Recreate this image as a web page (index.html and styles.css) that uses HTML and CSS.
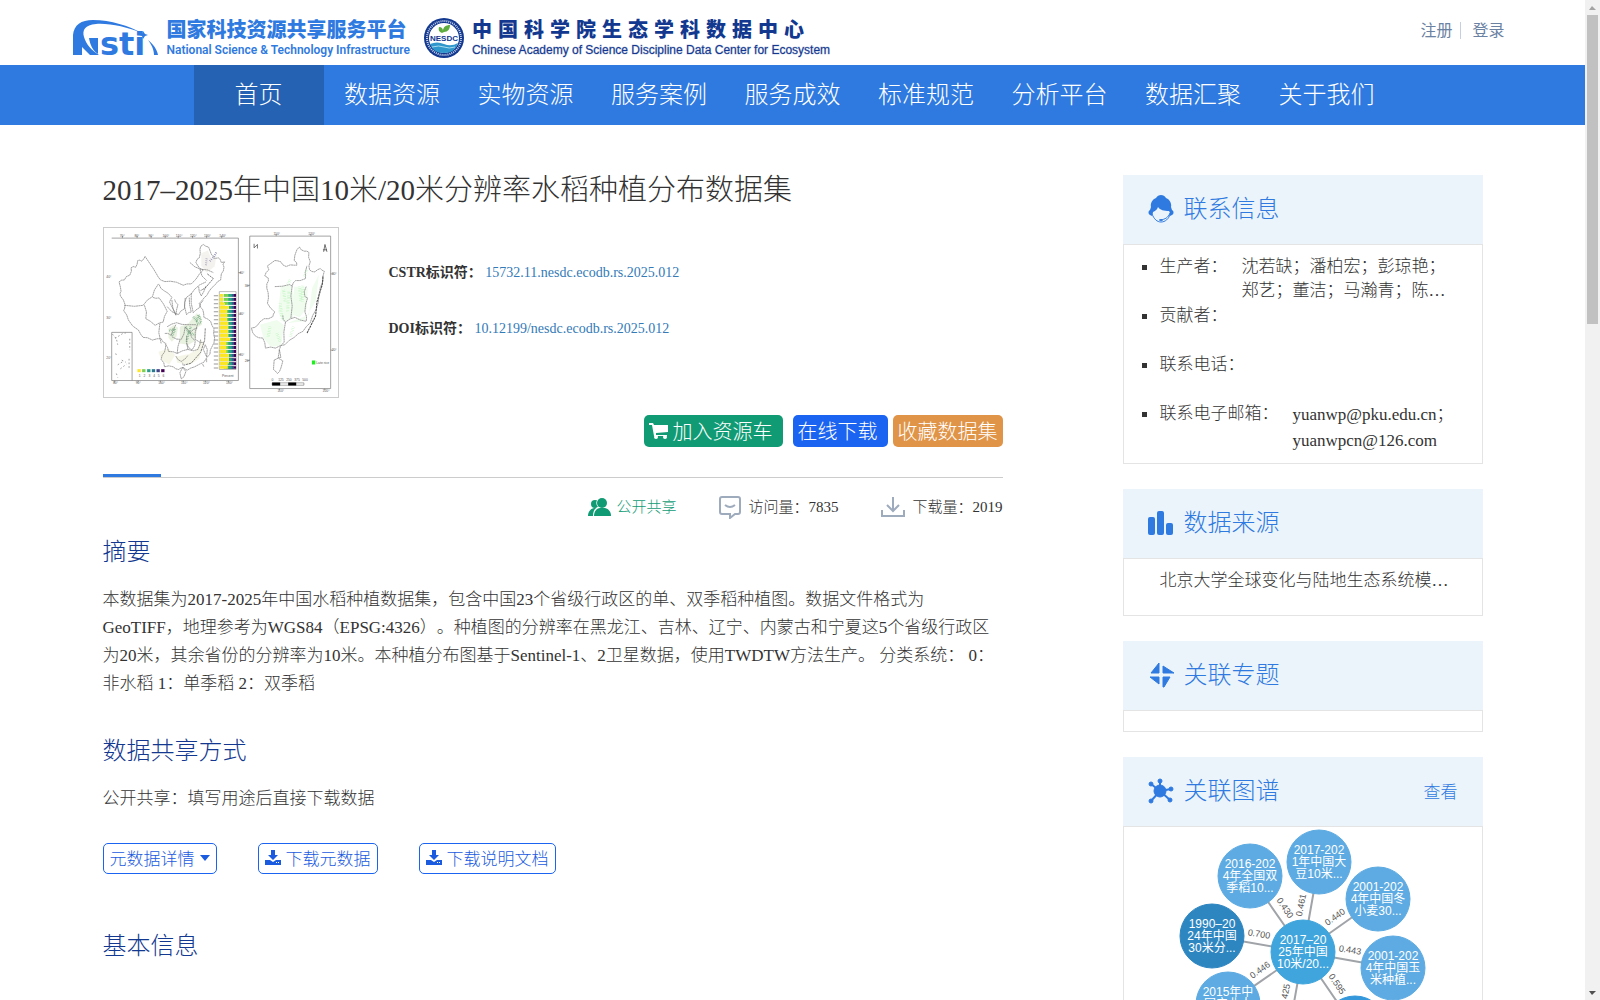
FILE: index.html
```html
<!DOCTYPE html>
<html lang="zh-CN">
<head>
  <meta charset="UTF-8">
  <title>2017–2025年中国10米/20米分辨率水稻种植分布数据集</title>
  <link rel="stylesheet" href="styles.css">
</head>
<body>
  <div class="page">
    <header class="top">
      <a class="logo" href="#">
        <svg class="logo-mark" width="86" height="36" viewBox="0 0 86 36">
          <path d="M0 35V15C1 5 8 0 20 0c18 0 36 6 49 13C54 7 36 3 23 4 12 5 9 10 11 17c2 7 7 13 15 18h-9L9 27v8z" fill="#2f7ae0"/>
          <path d="M16 18h9v16c-5-3-8-9-9-16z" fill="#2f7ae0"/>
          <text x="27" y="35" class="logo-letters">sti</text>
          <path d="M70 11l2 3 3 1-3 1-2 3-1-3-3-1 3-1zM75 20c5 4 9 9 10 15h-4c0-6-3-11-6-15z" fill="#2f7ae0"/>
        </svg>
        <span class="logo-text">
          <strong>国家科技资源共享服务平台</strong>
          <em>National Science &amp; Technology Infrastructure</em>
        </span>
      </a>
      <a class="logo center-logo" href="#">
        <svg width="40" height="40" viewBox="0 0 40 40">
          <circle cx="20" cy="20" r="20" fill="#12388f"/>
          <circle cx="20" cy="20" r="17" fill="none" stroke="#c9d4ec" stroke-width="2" stroke-dasharray="1 1"/>
          <circle cx="20" cy="20" r="15" fill="#fff"/>
          <path d="M6 26q7-3 14 0t14-1q-3 10-14 10T6 26z" fill="#2f97cc"/>
          <path d="M8 29q7-2 12 0t11 0" fill="none" stroke="#a8dcee"/>
          <path d="M18 15c-3-1-4-3-3-6 3 0 4 2 4 4 0-4 3-6 7-6 0 4-2 7-6 7z" fill="#5dae3e"/>
          <text x="20" y="23" text-anchor="middle" class="seal-text">NESDC</text>
        </svg>
        <span class="logo-text">
          <strong>中国科学院生态学科数据中心</strong>
          <em>Chinese Academy of Science Discipline Data Center for Ecosystem</em>
        </span>
      </a>
      <div class="account">
        <a href="#">注册</a>
        <a href="#">登录</a>
      </div>
    </header>

    <nav class="nav">
      <ul>
        <li class="active"><a href="#">首页</a></li>
        <li><a href="#">数据资源</a></li>
        <li><a href="#">实物资源</a></li>
        <li><a href="#">服务案例</a></li>
        <li><a href="#">服务成效</a></li>
        <li><a href="#">标准规范</a></li>
        <li><a href="#">分析平台</a></li>
        <li><a href="#">数据汇聚</a></li>
        <li><a href="#">关于我们</a></li>
      </ul>
    </nav>

    <main class="container">
      <article>
        <h1>2017–2025年中国10米/20米分辨率水稻种植分布数据集</h1>
        <div class="summary">
          <svg class="thumb" viewBox="43 205 700 505" role="img" aria-label="水稻种植分布图">
            <g fill="none" stroke="#777" stroke-width="2">
              <path d="M66 235H445V661H66M66 517V661M66 517H127V661" />
              <path d="M479 229H721V685H479z"/>
              <path d="M98 228v7M142 228v7M184 228v7M226 228v7M265 228v7M308 228v7M350 228v7M395 228v7M445 338h8M445 462h8M445 583h8M75 661v6M145 661v6M212 661v6M280 661v6M346 661v6M415 661v6M558 222v7M662 222v7M721 342h8M721 570h8M471 377h8M471 601h8M568 685v6M703 685v6"/>
            </g>
            <g class="map-label">
              <text x="90" y="233">70°</text><text x="134" y="233">80°</text><text x="176" y="233">90°</text><text x="218" y="233">100°</text><text x="258" y="233">110°</text><text x="300" y="233">120°</text><text x="342" y="233">130°</text><text x="388" y="233">140°</text>
              <text x="50" y="355">40°</text><text x="50" y="477">30°</text><text x="50" y="597">20°</text><text x="448" y="342">40°</text><text x="448" y="466">30°</text><text x="448" y="587">20°</text>
              <text x="70" y="671">80°</text><text x="138" y="671">90°</text><text x="205" y="671">100°</text><text x="273" y="671">110°</text><text x="339" y="671">120°</text><text x="408" y="671">130°</text>
              <text x="550" y="226">110°</text><text x="654" y="226">120°</text><text x="724" y="346">30°</text><text x="724" y="574">20°</text><text x="464" y="381">30°</text><text x="464" y="605">20°</text><text x="562" y="696">110°</text><text x="697" y="696">120°</text>
            </g>
            <!-- rice shading -->
            <g fill="#b9d39a" opacity=".3">
              <path d="M236 505l16-10 12 8-4 26-14 16-10-12zM270 500l26-10 24-30 14 10 2 24-14 8-6 40-20 12-26-4z"/>
              <path d="M206 575l30-10 20 20-18 28-24-14zM258 590l40-8 22-12 14-30 8 10-14 46-30 18-36-6z" fill="#e2e2b4"/>
              <path d="M334 280l20-8 12 30 14-18-6 36-24 18-16-20z" fill="#dcd7c8"/>
            </g>
            <path d="M310 470l10 12 6-18 8 22-14 8M288 500l8 20-6 24M302 500l-4 16 16 10M238 512l18-6-10 24" fill="none" stroke="#4f9565" stroke-width="7" stroke-dasharray="2 3" opacity=".7"/>
            <path d="M360 304l12-14 8-14M348 316l2-20" fill="none" stroke="#55508c" stroke-width="6" stroke-dasharray="2 4" opacity=".7"/>
            <!-- china with provinces -->
            <g class="outline">
              <path d="M166 290l-5 8-5 6-6-3-6 1-2 11-4 9-8-2-6 4 1 10-5 12-10 4-6 10-9 1-7 5 4 15 2 13-3 6 1 8 9 12 5 14-1 10-3 8 9 13 5 15 13 18 17 12 7 13 7 9 13 1 15 7 14-4 12 0 6 10 8 4-1 13-3 13-7 9-3 13 8 10 2 12 13-3 13 3 8 6 8 2 8-5 8-1 5 6 5 2 10-6 12-4 15-8 13-6 8-13 10-11 1-12 5-10 6-12 2-14-3-14 1-14-6-10-4-12-9-7-11-5-1-13-3-11-7-7-3-11 7-7 9-11 7-6 5-10 9-12 11-10 7-9 9-5 1-10 1-8 6-9 2-11-3-9 5-7-10 2-3-8-5-6-12 2-10-13-8-21-9-3-7-5-7 5-3 9 1 13-3 13-7 5-3 9 6 10 6 8 10 4-12 13-10 15-14 14-13 0-11 4-20-9-18-3-17 1-13-5-7-9-5-9-9-15z"/>
              <path d="M104 436l30 3 26-3 13-16 15-10 6-20 12-18M164 436l6 20-2 20 14 8 14 12 12-7 12-3 4-17 8-15-11-22-13-18-10 1-10-3M208 374l5 11 9 7 13 8 11 12-7 14 19 38M210 490l-3 28 7 32M232 440l14 15 20 9 6-10 12-8 0-18 6-16 14-10 10-14 15-13 19-9M300 308l15 13 17 7 20 2 18 8M330 328l6 20 14 14M246 420l3 24 9 22 2-16 4-16-7-8-3-8M286 414l-2 26 6 24 6-6 8-2-5-22-1-22M304 400l0 30 6 28 8-8 12-8 2-12 8-8M326 380l2 15 6 13 8-14 6-16M232 500l14-8 14-4 16 5 16 1 26 0M258 494l-9 17-5 15-10-6-10 0M246 530l14 7 14 1 8-16 4-22 7 10 9 6 9-8 11-4M270 540l-6 20-2 20-12-5-14-1-3-12-5-8M262 580l16-8 16-4-4-22 0-19M294 568l16 4 14-4 6-15 2-15M322 494l-6 22 0 22 13 8 13 2M258 588l6 10 10 6 12-8 8-10M300 516l5 16 11 10M290 550l6 12 10 8 8-13 2-15"/>
              <path d="M278 622l-8 16 4 18 8-6 6-16zM350 590l-10-22 6-14 6 14zM280 616l-2-8M350 596v10M338 612l4 8"/>
            </g>
            <path d="M346 505l-2 36-12 36-28 32-22 6M352 342l18 14-24 28-14 8" fill="none" stroke="#444" stroke-width="2" stroke-dasharray="7 2"/>
            <path d="M68 522l12 14 4 18M76 535l22-14 10-2M84 614l16-10M92 626l18-14M96 600l12 6M78 580l4 10M80 640l4 12M120 536v34M118 596v30" fill="none" stroke="#777" stroke-width="2" stroke-dasharray="5 6"/>
            <g>
              <path d="M143 627h10v9h-10z" fill="#fde725"/><path d="M157 627h10v9h-10z" fill="#7ad151"/><path d="M172 627h10v9h-10z" fill="#2a9d8a"/><path d="M186 627h10v9h-10z" fill="#2a788e"/><path d="M200 627h10v9h-10z" fill="#414487"/><path d="M214 627h10v9h-10z" fill="#440154"/>
            </g>
            <!-- stacked bars -->
            <path d="M388 395h50v233h-50z" fill="#fff" stroke="#999" stroke-width="2"/>
            <path d="M423 402V626" stroke="#440154" stroke-width="30" stroke-dasharray="9 3"/>
            <path d="M424 402V626" stroke="#35608d" stroke-width="15" stroke-dasharray="9 3"/>
            <path d="M418 402V626" stroke="#22a884" stroke-width="14" stroke-dasharray="9 3"/>
            <path d="M408 402V626" stroke="#7ad151" stroke-width="14" stroke-dasharray="9 3"/>
            <path d="M389 402h10v26h6v10h12v10h-6v36h4v50h6v8h-12v40h8v28h-4v16h-24z" fill="#fde725"/>
            <path d="M388 412H438M388 424H438M388 436H438M388 448H438M388 460H438M388 472H438M388 484H438M388 496H438M388 508H438M388 520H438M388 532H438M388 544H438M388 556H438M388 568H438M388 580H438M388 592H438M388 604H438M388 616H438" stroke="#e8e8e8" stroke-width="2"/>
            <path d="M378 406V626" stroke="#999" stroke-width="13" stroke-dasharray="3 9"/>
            <text x="396" y="649" class="map-label">Percent</text>
            <!-- southern provinces -->
            <g fill="#b8f5b4" opacity=".22">
              <path d="M572 380l30-4 8 30-2 66-28 14-16-30zM612 380l40 4-2 60-22 28-20-8z"/>
              <path d="M510 494l50-14 22 16-10 60-30 4-22-26zM590 490l50-6 36-60 10-80-20 40-10 80z"/>
            </g>
            <path d="M580 390l6 40M596 396l-4 60M628 380l4 42M638 378l-2 50M570 430l6 50M650 330l-8 20M560 520l10 24M600 360l-8 14M540 500l-6 30M610 500l-10 30" fill="none" stroke="#6ef06a" stroke-width="9" stroke-dasharray="1 4" opacity=".5"/>
            <g class="outline">
              <path d="M554 302l9 1 9 3 6 9 10 5 12-5 12 1 8 0-1-8-7-6 2-16 6-16 4-5 4-3 5 8 9 4 8 0 6 4-1 14 5 14-4 12 2 12 7 5 9 1 7-6 9-4 5 5 7 3-4 15 0 15-8 19-4 21-2 23-6 21-11 19-7 21-12 12-10 14-14 7-12 11-15 9-13 13-14 3-14 7-15-3-15 3-2-16-6-14-12-1-10-5-8-10-4-14 10-2 8-6 8-11 12-9 13 0 13-6 2-8 4-6-13-12-9-14 3-16-1-16-4-13 0-13 5-9-1-9-10-6 4-10 8-8-4-12z"/>
              <path d="M554 380l22-1 22-5 8 4 3-9 7-7 14 0 16-6-1-18 5-20M606 378l-4 30 4 30-4 36M578 466l1 12 7 8 13-9 15-5 16 8 18 4M648 380l-6 15 2 15 8 4-6 20-2 22 5 14-1 14M586 486l-5 30 1 30-10 11-6 15M552 600l12-6 14 8-3 12-3 10-4 10-6 6-6-7-6-5zM568 570l-4 22 8 0z"/>
            </g>
            <path d="M698 350l-2 24-16 52-4 42-20 40-6 12" fill="none" stroke="#444" stroke-width="3" stroke-dasharray="7 2"/>
            <path d="M665 601h10v12h-10z" fill="#1fef1f"/>
            <text x="678" y="611" class="map-label">Late rice</text>
            <path d="M492 252v12l10-10v12M700 276l4-22 6 22M698 270h12" fill="none" stroke="#333" stroke-width="2"/>
            <path d="M546 668h95v7h-95z" fill="#fff" stroke="#000"/>
            <path d="M546 667h24v9h-24zM594 667h24v9h-24z"/>
            <g class="map-label"><text x="544" y="661">0</text><text x="564" y="661">125</text><text x="588" y="661">250</text><text x="612" y="661">375</text><text x="636" y="661">500</text><text x="147" y="649">1</text><text x="161" y="649">2</text><text x="176" y="649">3</text><text x="190" y="649">4</text><text x="204" y="649">5</text><text x="218" y="649">6</text></g>
          </svg>
          <div class="ids">
            <p><b>CSTR标识符：</b> <a href="#">15732.11.nesdc.ecodb.rs.2025.012</a></p>
            <p><b>DOI标识符：</b> <a href="#">10.12199/nesdc.ecodb.rs.2025.012</a></p>
          </div>
        </div>

        <div class="actions">
          <button class="btn cart" type="button">
            <svg width="19" height="17" viewBox="0 0 19 17" fill="#fff"><path d="M0 1h4l1 2h14v7L7 11v2h11v1H5L3 3H0z"/><circle cx="7" cy="15" r="2"/><circle cx="16" cy="15" r="2"/></svg>
            加入资源车
          </button>
          <button class="btn online" type="button">在线下载</button>
          <button class="btn fav" type="button">收藏数据集</button>
        </div>
        <div class="divider"></div>

        <div class="stats">
          <span class="share">
            <svg width="23" height="18" viewBox="0 0 23 18" fill="#119b74"><circle cx="7" cy="6" r="4"/><path d="M0 18c0-4 2-7 6-8h4v8z"/><path d="M13-1a6 6 0 0 1 5 9c3 1 5 5 5 10H5c0-5 2-8 5-9a6 6 0 0 1 3-10z" fill="#fff"/><circle cx="14" cy="5" r="5"/><path d="M6 18c0-5 3-8 6-8h5c4 1 6 4 6 8z"/></svg>
            公开共享
          </span>
          <span>
            <svg width="22" height="23" viewBox="0 0 22 23" fill="none" stroke="#9dabbd" stroke-width="2"><path d="M3 1h16q2 0 2 2v13q0 2-2 2h-3l-5 4v-4H3q-2 0-2-2V3q0-2 2-2zM6 9q5 4 10 0"/></svg>
            访问量：7835
          </span>
          <span>
            <svg width="24" height="20" viewBox="0 0 24 20" fill="none" stroke="#9dabbd" stroke-width="2"><path d="M12 0v14M6 8l6 6 6-6M1 13v6h22v-6"/></svg>
            下载量：2019
          </span>
        </div>

        <section>
          <h2>摘要</h2>
          <p>本数据集为2017-2025年中国水稻种植数据集，包含中国23个省级行政区的单、双季稻种植图。数据文件格式为GeoTIFF，地理参考为WGS84（EPSG:4326）。种植图的分辨率在黑龙江、吉林、辽宁、内蒙古和宁夏这5个省级行政区为20米，其余省份的分辨率为10米。本种植分布图基于Sentinel-1、2卫星数据，使用TWDTW方法生产。 分类系统： 0：非水稻 1：单季稻 2：双季稻</p>
        </section>

        <section>
          <h2>数据共享方式</h2>
          <p>公开共享：填写用途后直接下载数据</p>
          <div class="meta-buttons">
            <button type="button">元数据详情
              <svg width="10" height="6" viewBox="0 0 10 6" fill="#1a5be0"><path d="M0 0h10L5 6z"/></svg>
            </button>
            <button type="button">
              <svg width="16" height="15" viewBox="0 0 16 15" fill="#1a5be0"><path d="M6 0h4v5h3L8 10 3 5h3zM0 10h5l3 2 3-2h5v5H0z"/><path d="M11 12h1v1h-1zM13 12h1v1h-1z" fill="#fff"/></svg>
              下载元数据
            </button>
            <button type="button">
              <svg width="16" height="15" viewBox="0 0 16 15" fill="#1a5be0"><path d="M6 0h4v5h3L8 10 3 5h3zM0 10h5l3 2 3-2h5v5H0z"/><path d="M11 12h1v1h-1zM13 12h1v1h-1z" fill="#fff"/></svg>
              下载说明文档
            </button>
          </div>
        </section>

        <section class="basic">
          <h2>基本信息</h2>
        </section>
      </article>

      <aside class="sidebar">
        <div class="card">
          <div class="card-head">
            <svg width="26" height="28" viewBox="0 0 26 28"><path d="M3 12C2 8 5 4 8 3c2-4 8-4 10 0 3 1 6 5 5 9l1 3c2 1 2 4 0 5l-2 1c0-2 0-4-1-5-5 0-9-1-11-4-1 3-3 4-5 5 0 2-1 3-1 4l-2-1c-2-1-2-4 0-5z" fill="#2f7ae0"/><path d="M4 19c2 5 5 8 9 8s8-3 9-8M22 18c-2 5-5 6-9 7" fill="none" stroke="#2f7ae0"/><ellipse cx="13" cy="25" rx="2" ry="1" fill="#2f7ae0"/></svg>
            <h3>联系信息</h3>
          </div>
          <ul class="card-body contact">
            <li><span>生产者：</span><span>沈若缺；潘柏宏；彭琼艳；<br>郑艺；董洁；马瀚青；陈…</span></li>
            <li><span>贡献者：</span></li>
            <li><span>联系电话：</span></li>
            <li><span>联系电子邮箱：</span><span class="mail">yuanwp@pku.edu.cn；<br>yuanwpcn@126.com</span></li>
          </ul>
        </div>

        <div class="card">
          <div class="card-head">
            <svg width="26" height="26" viewBox="0 0 26 26" fill="#2f7ae0"><rect x="0" y="7" width="7" height="18" rx="2"/><rect x="9" y="1" width="7" height="24" rx="2"/><rect x="18" y="13" width="7" height="12" rx="2"/></svg>
            <h3>数据来源</h3>
          </div>
          <div class="card-body source">北京大学全球变化与陆地生态系统模…</div>
        </div>

        <div class="card">
          <div class="card-head">
            <svg width="26" height="26" viewBox="0 0 26 26" fill="#2f7ae0" stroke="#2f7ae0" stroke-linejoin="round"><path d="M11 1v10H3zM15 4l11 7H15zM2 15h9v7zM15 15h7l-6 10h-1z"/></svg>
            <h3>关联专题</h3>
          </div>
          <div class="card-body empty"></div>
        </div>

        <div class="card">
          <div class="card-head">
            <svg width="26" height="26" viewBox="0 0 26 26" fill="#2f7ae0" stroke="#2f7ae0"><path d="M12 13V3M12 13L3 6M12 13l11-2M12 13l10 9M12 13l-9 10" stroke-width="2"/><ellipse cx="12" cy="13" rx="6" ry="6"/><circle cx="12" cy="3" r="2"/><circle cx="3" cy="6" r="2"/><circle cx="23" cy="11" r="2"/><circle cx="22" cy="22" r="2"/><circle cx="3" cy="23" r="2"/></svg>
            <h3>关联图谱</h3>
            <a href="#">查看</a>
          </div>
          <div class="card-body graph">
            <svg width="358" height="300" viewBox="0 0 358 300">
              <g stroke="#a0a4a8" stroke-width="2">
                <path d="M179 125L126 49M179 125L195 35M179 125L254 72M179 125L269 141M179 125L88 109M179 125L104 177M179 125L231 201M179 125L163 215"/>
              </g>
              <g class="weight">
                <text transform="translate(161 81) rotate(56)" y="3">0.430</text>
                <text transform="translate(177 78) rotate(-79)" y="3">0.461</text>
                <text transform="translate(211 90) rotate(-35)" y="3">0.440</text>
                <text transform="translate(226 123) rotate(9)" y="3">0.443</text>
                <text transform="translate(135 107) rotate(9)" y="3">0.700</text>
                <text transform="translate(136 143) rotate(-35)" y="3">0.446</text>
                <text transform="translate(213 157) rotate(56)" y="3">0.595</text>
                <text transform="translate(161 168) rotate(-79)" y="3">0.425</text>
              </g>
              <g id="nodes"></g>
            </svg>
          </div>
        </div>
      </aside>
    </main>
  </div>

  <div class="scrollbar">
    <svg width="15" height="15" viewBox="0 0 15 15" fill="#a3a3a3"><path d="M4 10h7L7 6z"/></svg>
    <div class="thumb-bar"></div>
    <svg width="15" height="15" viewBox="0 0 15 15" fill="#505050"><path d="M4 6h7l-4 4z"/></svg>
  </div>

  <script>
    const nodes = [
      { x: 126, y: 49, color: "#5dabe2", lines: ["2016-202", "4年全国双", "季稻10..."] },
      { x: 195, y: 35, color: "#5dabe2", lines: ["2017-202", "1年中国大", "豆10米..."] },
      { x: 254, y: 72, color: "#5dabe2", lines: ["2001-202", "4年中国冬", "小麦30..."] },
      { x: 269, y: 141, color: "#5dabe2", lines: ["2001-202", "4年中国玉", "米种植..."] },
      { x: 88, y: 109, color: "#2e86c1", lines: ["1990–20", "24年中国", "30米分..."] },
      { x: 104, y: 177, color: "#5dabe2", lines: ["2015年中", "国产业人"] },
      { x: 231, y: 201, color: "#3498db", lines: [] },
      { x: 179, y: 125, color: "#3fa5dc", lines: ["2017–20", "25年中国", "10米/20..."] }
    ];

    // Draw each node with its wrapped label
    document.getElementById("nodes").innerHTML = nodes.map(n => `
      <circle cx="${n.x}" cy="${n.y}" r="32" fill="${n.color}" stroke="${n.color}"/>
      ${n.lines.map((t, i) => `<text x="${n.x}" y="${n.y - 8 + i * 12}">${t}</text>`).join("")}
    `).join("");
  </script>
</body>
</html>
```
FILE: styles.css
```css
* {
  box-sizing: border-box;
}

body {
  margin: 0;
  display: flex;
  height: 100vh;
  overflow: hidden;
  font-family: "Liberation Serif", "Noto Sans CJK SC", serif;
  font-size: 17px;
  font-weight: 300;
  text-spacing-trim: space-all;
  color: #333;
  background: #fff;
}

h1, h2, h3, p, ul {
  margin: 0;
  padding: 0;
  font-weight: 300;
}

a {
  color: inherit;
  text-decoration: none;
}

button {
  font: inherit;
  cursor: pointer;
}

svg {
  flex: none;
}

.page {
  flex: 1;
  min-width: 0;
  overflow: hidden;
}

/* Header */
.top {
  display: flex;
  align-items: center;
  max-width: 1440px;
  height: 65px;
  margin: 0 auto;
  padding-top: 10px;
}

.logo {
  display: flex;
  align-items: center;
  gap: 8px;
  color: #2f7ae0;
}

.logo-letters {
  font: bold 32px "DejaVu Sans", sans-serif;
  fill: #2f7ae0;
}

.logo-text strong {
  display: block;
  font: 900 20px/24px "Noto Sans CJK SC", sans-serif;
}

.logo-text em {
  display: block;
  font: 600 12px/18px "Roboto", sans-serif;
}

.center-logo {
  margin-left: 14px;
  color: #12388f;
}

.center-logo strong {
  letter-spacing: 6px;
}

.center-logo em {
  font: 12px/18px "Liberation Sans", sans-serif;
  -webkit-text-stroke: 1px #12388f44;
}

.seal-text {
  font: bold 8px "Liberation Sans", sans-serif;
  fill: #12388f;
}

.account {
  margin-left: auto;
  margin-top: -14px;
  padding-right: 8px;
  font-size: 16px;
  font-weight: 400;
  line-height: 17px;
  color: #6b82a3;
}

.account a + a {
  margin-left: 4px;
  padding-left: 11px;
  border-left: 1px solid #c5cfdf;
}

/* Navigation */
.nav {
  background: #2f7ae0;
}

.nav ul {
  display: flex;
  justify-content: space-between;
  max-width: 1198px;
  margin: 0 auto;
  list-style: none;
}

.nav a {
  display: block;
  width: 130px;
  font-size: 24px;
  line-height: 60px;
  text-align: center;
  color: #fff;
}

.nav .active {
  background: #2662b3;
}

/* Main area */
.container {
  display: grid;
  grid-template-columns: minmax(0, 1fr) 360px;
  gap: 120px;
  max-width: 1380px;
  margin: 0 auto;
  padding-top: 50px;
}

h1 {
  margin-bottom: 22px;
  font-size: 29px;
  line-height: 30px;
}

.summary {
  display: flex;
  gap: 50px;
}

.thumb {
  width: 236px;
  height: 171px;
  border: 1px solid #ccc;
}

.outline {
  fill: none;
  stroke: #777;
  stroke-width: 2;
  stroke-dasharray: 6 1;
}

.map-label {
  font: 10px "Liberation Sans", sans-serif;
  fill: #555;
}

.ids {
  padding-top: 18px;
  font-size: 14px;
  line-height: 56px;
}

.ids b {
  font-weight: 700;
}

.ids a {
  color: #337ab7;
}

.actions {
  display: flex;
  justify-content: flex-end;
  gap: 5px;
  margin-top: 17px;
}

.btn {
  display: flex;
  align-items: center;
  gap: 5px;
  height: 32px;
  padding: 0 5px 2px;
  border: 0;
  border-radius: 5px;
  font-size: 20px;
  color: #fff;
}

.cart {
  margin-right: 5px;
  padding-right: 10px;
  background: #119b74;
}

.online {
  padding-right: 10px;
  background: #1b63f1;
}

.fav {
  background: #e09448;
}

.divider {
  height: 4px;
  margin-top: 27px;
  border-bottom: 1px solid #ccc;
  background: linear-gradient(#2f7ae0, #2f7ae0) left / 58px 3px no-repeat;
}

.stats {
  display: flex;
  justify-content: flex-end;
  gap: 43px;
  margin-top: 17px;
  font-size: 15px;
  line-height: 24px;
}

.stats span {
  display: flex;
  align-items: center;
  gap: 7px;
}

.stats .share {
  gap: 5px;
  color: #119b74;
}

section {
  margin-bottom: 38px;
}

h2 {
  margin: 18px 0 19px;
  font-size: 24px;
  line-height: 30px;
  color: #12388f;
}

section p {
  line-height: 28px;
}

.meta-buttons {
  display: flex;
  gap: 41px;
  margin: 30px 0 57px;
}

.meta-buttons button {
  display: flex;
  align-items: center;
  gap: 5px;
  height: 31px;
  padding: 0 6px 2px;
  border: 1px solid #1b63f1;
  border-radius: 5px;
  background: #fff;
  color: #1a5be0;
}

/* Sidebar */
.card {
  margin-bottom: 25px;
}

.card-head {
  display: flex;
  align-items: center;
  gap: 10px;
  height: 69px;
  padding: 0 25px 2px;
  background: #ecf4fb;
  color: #2f7ae0;
}

.card-head h3 {
  font-size: 24px;
  line-height: 30px;
}

.card-head a {
  margin-left: auto;
}

.card-body {
  border: 1px solid #e4e4e4;
  line-height: 24px;
}

.contact {
  padding: 10px 0 9px 18px;
  list-style: none;
}

.contact li {
  display: flex;
  gap: 14px;
  min-height: 49px;
}

.contact li::before {
  content: "";
  width: 5px;
  height: 5px;
  margin: 10px -1px 0 0;
  background: #333;
}

.contact .mail {
  line-height: 26px;
}

.source {
  padding: 10px 0 22px 36px;
}

.empty {
  height: 22px;
}

.graph svg {
  display: block;
}

.graph text {
  font: 12px "Liberation Sans", "Noto Sans CJK SC", sans-serif;
  text-anchor: middle;
  fill: #fff;
}

.graph .weight text {
  font-size: 9px;
  fill: #555;
}

/* Scroll track */
.scrollbar {
  display: flex;
  flex-direction: column;
  width: 15px;
  background: #f1f1f1;
}

.thumb-bar {
  height: 309px;
  margin: 0 2px auto;
  background: #c1c1c1;
}
```
